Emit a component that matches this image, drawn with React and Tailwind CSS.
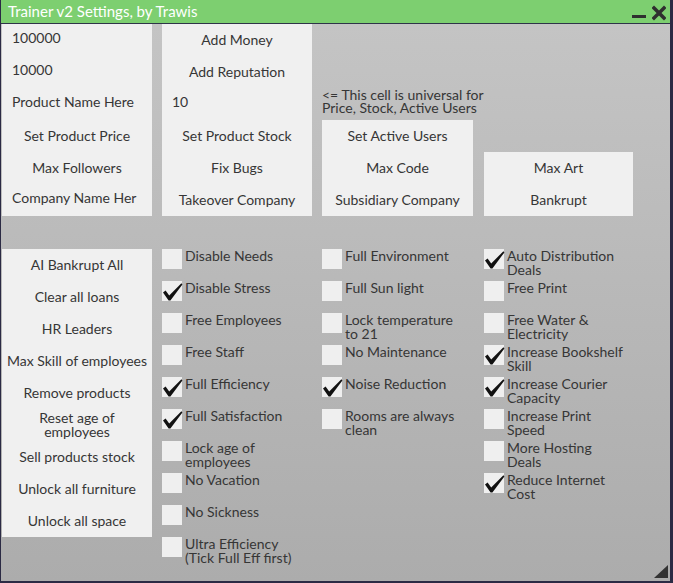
import React from "react";

const Field = ({ children }) => (
  <div className="h-8 flex items-center pl-[10px] pb-[6px] whitespace-nowrap overflow-hidden">{children}</div>
);
const Btn = ({ children }) => (
  <div className="h-8 flex items-center justify-center text-center whitespace-nowrap leading-[14px]">{children}</div>
);

const Check = () => (
  <svg className="absolute left-0 top-0" width="21" height="21" viewBox="0 0 21 21">
    <path d="M1 11.5 L3.6 9.6 L7.2 14.6 L19.4 2.2 L20.4 3.4 L8.4 19.4 L6.6 19.4 Z" fill="#111" />
  </svg>
);

const CB = ({ label, checked }) => (
  <div className="h-8 flex items-start gap-[3px]">
    <div className="relative w-5 h-5 shrink-0 bg-[#efefef]">{checked && <Check />}</div>
    <div className="leading-[14px] whitespace-nowrap">{label}</div>
  </div>
);

const L = (a, b) => (
  <>
    {a}
    <br />
    {b}
  </>
);

export default function App() {
  return (
    <div className="w-[673px] h-[583px] bg-[#2b2a44] pl-px pr-[3px] pb-[2px] flex flex-col font-['Lato',sans-serif] text-[14px] text-[#363636]">
      <div className="h-[23px] shrink-0 bg-[#7dcf70] flex items-center justify-between pl-[7px] pr-[4px] border-b border-[#2e3448] box-content">
        <div className="text-white text-[15px] leading-[23px]">Trainer v2 Settings, by Trawis</div>
        <div className="flex items-center gap-[6px]">
          <svg width="14" height="23" viewBox="0 0 14 23">
            <rect x="0" y="15" width="14" height="3" fill="#2f2f2f" />
          </svg>
          <svg width="14" height="23" viewBox="0 0 14 23">
            <path d="M2 8 L12 18 M12 8 L2 18" stroke="#2f2f2f" strokeWidth="3.6" strokeLinecap="square" />
          </svg>
        </div>
      </div>
      <div className="flex-1 relative bg-linear-to-b from-[#c4c4c4] to-[#acacac] pl-px">
        <div className="grid grid-cols-[150px_150px_151px_150px] gap-x-[10px]">
          <div className="bg-[#f0f0f0] flex flex-col">
            <Field>100000</Field>
            <Field>10000</Field>
            <Field>Product Name Here</Field>
            <Btn>Set Product Price</Btn>
            <Btn>Max Followers</Btn>
            <Field>Company Name Her</Field>
          </div>
          <div className="bg-[#f0f0f0] flex flex-col">
            <Btn>Add Money</Btn>
            <Btn>Add Reputation</Btn>
            <Field>10</Field>
            <Btn>Set Product Stock</Btn>
            <Btn>Fix Bugs</Btn>
            <Btn>Takeover Company</Btn>
          </div>
          <div className="flex flex-col">
            <div className="h-16" />
            <div className="h-8 flex flex-col justify-start text-[14px] leading-[13px] whitespace-nowrap">
              <div>&lt;= This cell is universal for</div>
              <div>Price, Stock, Active Users</div>
            </div>
            <div className="bg-[#f0f0f0] flex flex-col">
              <Btn>Set Active Users</Btn>
              <Btn>Max Code</Btn>
              <Btn>Subsidiary Company</Btn>
            </div>
          </div>
          <div className="flex flex-col ml-px">
            <div className="h-32" />
            <div className="bg-[#f0f0f0] flex flex-col">
              <Btn>Max Art</Btn>
              <Btn>Bankrupt</Btn>
            </div>
          </div>
        </div>

        <div className="grid grid-cols-[150px_150px_151px_150px] gap-x-[10px] mt-[33px] items-start">
          <div className="bg-[#f0f0f0] flex flex-col">
            <Btn>AI Bankrupt All</Btn>
            <Btn>Clear all loans</Btn>
            <Btn>HR Leaders</Btn>
            <Btn>Max Skill of employees</Btn>
            <Btn>Remove products</Btn>
            <Btn>{L("Reset age of", "employees")}</Btn>
            <Btn>Sell products stock</Btn>
            <Btn>Unlock all furniture</Btn>
            <Btn>Unlock all space</Btn>
          </div>
          <div className="flex flex-col">
            <CB label="Disable Needs" />
            <CB label="Disable Stress" checked />
            <CB label="Free Employees" />
            <CB label="Free Staff" />
            <CB label="Full Efficiency" checked />
            <CB label="Full Satisfaction" checked />
            <CB label={L("Lock age of", "employees")} />
            <CB label="No Vacation" />
            <CB label="No Sickness" />
            <CB label={L("Ultra Efficiency", "(Tick Full Eff first)")} />
          </div>
          <div className="flex flex-col">
            <CB label="Full Environment" />
            <CB label="Full Sun light" />
            <CB label={L("Lock temperature", "to 21")} />
            <CB label="No Maintenance" />
            <CB label="Noise Reduction" checked />
            <CB label={L("Rooms are always", "clean")} />
          </div>
          <div className="flex flex-col ml-px">
            <CB label={L("Auto Distribution", "Deals")} checked />
            <CB label="Free Print" />
            <CB label={L("Free Water &", "Electricity")} />
            <CB label={L("Increase Bookshelf", "Skill")} checked />
            <CB label={L("Increase Courier", "Capacity")} checked />
            <CB label={L("Increase Print", "Speed")} />
            <CB label={L("More Hosting", "Deals")} />
            <CB label={L("Reduce Internet", "Cost")} checked />
          </div>
        </div>

        <svg className="absolute right-[2px] bottom-[3px]" width="14" height="13" viewBox="0 0 14 13">
          <path d="M14 0 L14 13 L0 13 Z" fill="#333" />
        </svg>
      </div>
    </div>
  );
}
